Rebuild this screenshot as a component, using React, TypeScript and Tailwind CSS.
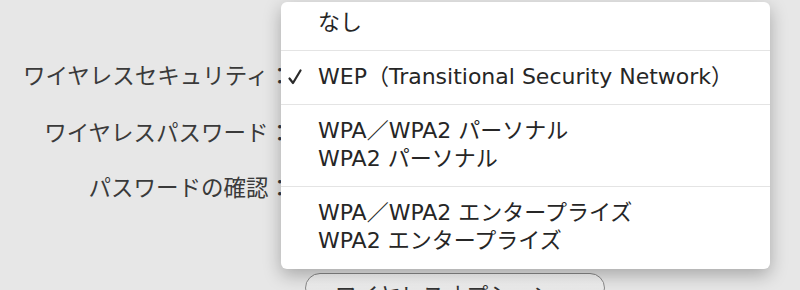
import { Fragment } from "react";

const font = { fontFamily: '"DejaVu Sans", "Noto Sans CJK JP", sans-serif' };

const groups = [
  [{ label: "なし" }],
  [{ label: "WEP（Transitional Security Network）", checked: true }],
  [{ label: "WPA／WPA2 パーソナル" }, { label: "WPA2 パーソナル" }],
  [{ label: "WPA／WPA2 エンタープライズ" }, { label: "WPA2 エンタープライズ" }],
];

function Check() {
  return (
    <svg width="14" height="16" viewBox="0 0 14 16" className="absolute left-[7px] top-[6px]">
      <path d="M1.5 9.5 L5 14 L12.5 1.5" fill="none" stroke="#2a2a2a" strokeWidth="2.2" strokeLinecap="round" strokeLinejoin="round" />
    </svg>
  );
}

export default function App() {
  return (
    <div
      className="relative w-[800px] h-[290px] overflow-hidden bg-[#e7e7e7] text-[#333]"
      style={font}
    >
      {/* form behind the popup */}
      <div className="flex flex-col pt-[62px]">
        <div className="w-[291px] h-[28px] leading-[28px] text-right text-[22.5px] text-[#3a3a3a] whitespace-nowrap">
          ワイヤレスセキュリティ：
        </div>
        <div className="mt-[29px] w-[291px] h-[28px] leading-[28px] text-right text-[22.5px] text-[#3a3a3a] whitespace-nowrap">
          ワイヤレスパスワード：
        </div>
        <div className="mt-[27px] w-[291px] h-[28px] leading-[28px] text-right text-[22.5px] text-[#3a3a3a] whitespace-nowrap">
          パスワードの確認：
        </div>
        <div className="mt-[71px] ml-[305px] w-[300px] h-[30px] rounded-full border border-[#8a8a8a] bg-gradient-to-b from-[#fbfbfb] to-[#dcdcdc] pt-[8px] text-center text-[22px] leading-[28px] text-[#333] whitespace-nowrap">
          ワイヤレスオプション...
        </div>
      </div>

      {/* popup menu */}
      <div className="absolute left-[281px] top-[2px] w-[489px] rounded-[6px] bg-white pt-[7px] pb-[14px] shadow-[0_6px_18px_rgba(0,0,0,0.28)]">
        {groups.map((group, gi) => (
          <Fragment key={gi}>
            {gi > 0 && <div className="mt-[13px] mb-[12px] h-px bg-[#e4e4e4]" />}
            {group.map((item) => (
              <div
                key={item.label}
                className="relative h-[28px] pl-[37px] text-[22px] leading-[28px] text-[#262626] whitespace-nowrap"
              >
                {item.checked && <Check />}
                {item.label}
              </div>
            ))}
          </Fragment>
        ))}
      </div>
    </div>
  );
}
